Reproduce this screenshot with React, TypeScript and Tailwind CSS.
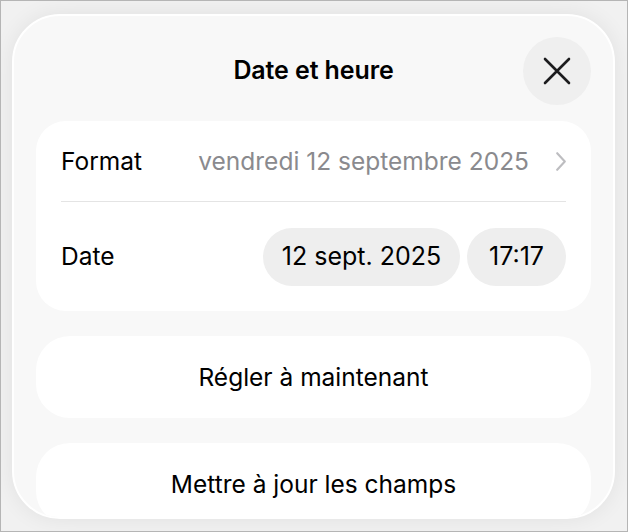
import React from "react";

const font = { fontFamily: "Inter, 'Noto Sans', sans-serif" };

const Chevron = () => (
  <svg width="10" height="19" viewBox="0 0 10 19" fill="none" className="shrink-0">
    <path d="M1.2 1.2L8.8 9.5L1.2 17.8" stroke="#bdbdc0" strokeWidth="2.1" strokeLinecap="round" strokeLinejoin="round" />
  </svg>
);

const CloseIcon = () => (
  <svg width="28" height="28" viewBox="0 0 28 28" fill="none">
    <path d="M2 2L26 26M26 2L2 26" stroke="#1c1c1e" strokeWidth="2.6" strokeLinecap="round" />
  </svg>
);

export default function App() {
  return (
    <div
      className="w-[628px] h-[532px] border border-[#b5b5b5] bg-[#f1f1f1] pl-[11px] pt-[13px] overflow-hidden"
      style={font}
    >
      <div className="w-[603px] h-[505px] rounded-[48px] bg-[#f8f8f8] border-2 border-white shadow-[0_0_22px_rgba(0,0,0,0.07)] overflow-hidden px-[22px] pt-[21px]">
        {/* Header */}
        <div className="relative h-[68px] flex items-center justify-center">
          <h1 className="text-[25px] font-semibold text-black tracking-[-0.1px]">Date et heure</h1>
          <button className="absolute right-0 top-0 w-[68px] h-[68px] rounded-full bg-[#efefef] flex items-center justify-center">
            <CloseIcon />
          </button>
        </div>

        {/* Settings card */}
        <div className="mt-[16px] rounded-[30px] bg-white px-[25px]">
          <div className="h-[81px] flex items-center justify-between border-b border-[#e4e4e4]">
            <span className="text-[24.5px] text-black">Format</span>
            <div className="flex items-center gap-[27px]">
              <span className="text-[24.5px] text-[#8a8a8e]">vendredi 12 septembre 2025</span>
              <Chevron />
            </div>
          </div>
          <div className="h-[109px] flex items-center justify-between">
            <span className="text-[24.5px] text-black">Date</span>
            <div className="flex items-center gap-[7px]">
              <span className="h-[58px] w-[197px] rounded-full bg-[#eeeeee] flex items-center justify-center text-[25px] text-black">
                12 sept. 2025
              </span>
              <span className="h-[58px] w-[99px] rounded-full bg-[#eeeeee] flex items-center justify-center text-[25px] text-black">
                17:17
              </span>
            </div>
          </div>
        </div>

        {/* Actions */}
        <button className="mt-[25px] w-full h-[82px] rounded-[34px] bg-white flex items-center justify-center text-[24.5px] text-black">
          Régler à maintenant
        </button>
        <button className="mt-[25px] w-full h-[82px] rounded-[34px] bg-white flex items-center justify-center text-[24.5px] text-black">
          Mettre à jour les champs
        </button>
      </div>
    </div>
  );
}
